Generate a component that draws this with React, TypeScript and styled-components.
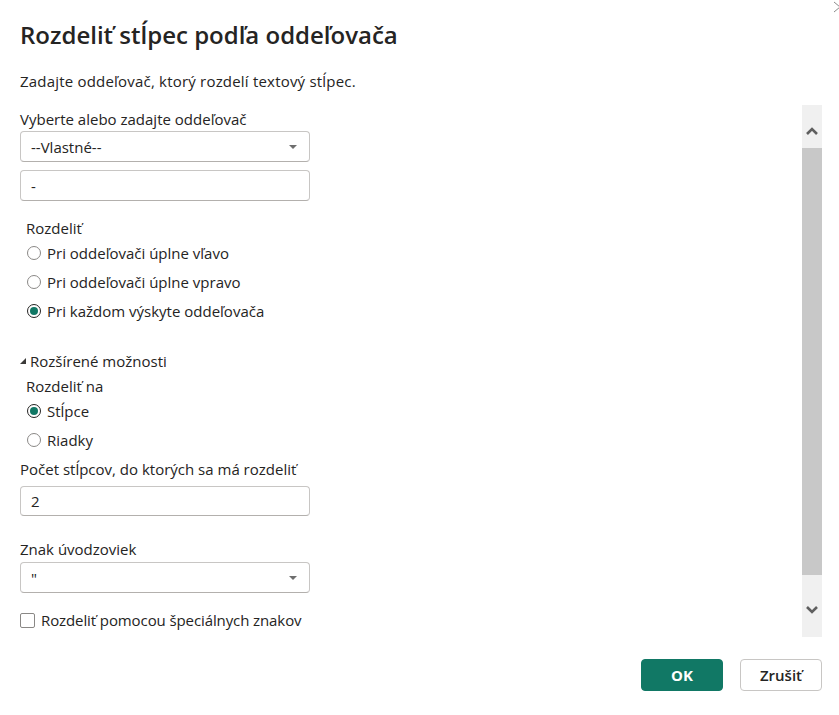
import React, { useState } from "react";
import styled, { createGlobalStyle } from "styled-components";

const GlobalStyle = createGlobalStyle`
  html, body {
    margin: 0;
    padding: 0;
    background: #fff;
  }
  body {
    font-family: "Segoe UI", "Open Sans", "Noto Sans", sans-serif;
    color: #252423;
  }
`;

const teal = "#117865";

const Dialog = styled.div`
  position: relative;
  width: 839px;
  height: 715px;
  box-sizing: border-box;
  padding: 19px 17px 0 20px;
  background: #fff;
  display: flex;
  flex-direction: column;
  overflow: hidden;
`;

const CloseX = styled.svg`
  position: absolute;
  top: 1px;
  right: -4px;
`;

const Title = styled.h1`
  margin: 0;
  font-size: 24px;
  line-height: 32px;
  font-weight: 600;
  color: #252423;
`;

const Subtitle = styled.p`
  margin: 20px 0 0 0;
  font-size: 15px;
  line-height: 20px;
  letter-spacing: 0.2px;
`;

const Body = styled.div`
  display: flex;
  justify-content: space-between;
  height: 532px;
  margin-top: 14px;
`;

const Content = styled.div`
  width: 290px;
  padding-top: 4px;
  display: flex;
  flex-direction: column;
`;

const Label = styled.div<{ $indent?: boolean; $top?: number }>`
  font-size: 15px;
  line-height: 20px;
  padding-left: ${(p) => (p.$indent ? "6px" : "0")};
  margin-top: ${(p) => p.$top ?? 0}px;
  white-space: nowrap;
`;

const Field = styled.div<{ $top?: number; $h?: number }>`
  box-sizing: border-box;
  height: ${(p) => p.$h ?? 31}px;
  margin-top: ${(p) => p.$top ?? 0}px;
  border: 1px solid #c8c6c4;
  border-bottom-color: #b3b0ad;
  border-radius: 4px;
  display: flex;
  align-items: center;
  justify-content: space-between;
  padding: 0 12px 0 10px;
  font-size: 15px;
  color: #252423;
`;

const Caret = styled.span`
  width: 0;
  height: 0;
  border-left: 4px solid transparent;
  border-right: 4px solid transparent;
  border-top: 4px solid #6e6e6e;
`;

const RadioRow = styled.label`
  display: flex;
  align-items: center;
  gap: 6px;
  height: 29px;
  padding-left: 7px;
  font-size: 15px;
  cursor: pointer;
  white-space: nowrap;
`;

const RadioCircle = styled.span<{ $checked: boolean }>`
  box-sizing: border-box;
  width: 14px;
  height: 14px;
  border-radius: 50%;
  border: 1px solid ${(p) => (p.$checked ? "#252423" : "#8a8886")};
  display: flex;
  align-items: center;
  justify-content: center;
  &::after {
    content: "";
    width: 8px;
    height: 8px;
    border-radius: 50%;
    background: ${(p) => (p.$checked ? teal : "transparent")};
  }
`;

const Expander = styled.div`
  display: flex;
  align-items: center;
  gap: 4px;
  margin-top: 26px;
  font-size: 15px;
  line-height: 20px;
`;

const CheckRow = styled.label`
  display: flex;
  align-items: center;
  gap: 6px;
  margin-top: 17px;
  height: 20px;
  font-size: 15px;
  white-space: nowrap;
  letter-spacing: -0.1px;
`;

const CheckBox = styled.span`
  box-sizing: border-box;
  width: 15px;
  height: 15px;
  border: 1px solid #8a8886;
  border-radius: 2px;
`;

const ScrollBar = styled.div`
  width: 20px;
  background: #f0f0f0;
  display: flex;
  flex-direction: column;
  align-items: stretch;
`;

const ArrowZone = styled.div<{ $h: number; $pad: number }>`
  height: ${(p) => p.$h}px;
  box-sizing: border-box;
  padding-top: ${(p) => p.$pad}px;
  display: flex;
  justify-content: center;
`;

const Thumb = styled.div`
  height: 427px;
  background: #c8c8c8;
`;

const Footer = styled.div`
  display: flex;
  justify-content: flex-end;
  gap: 17px;
  margin-top: 22px;
`;

const Button = styled.button<{ $primary?: boolean }>`
  width: 82px;
  height: 32px;
  border-radius: 4px;
  font-family: inherit;
  font-size: 15px;
  font-weight: ${(p) => (p.$primary ? 700 : 600)};
  background: ${(p) => (p.$primary ? teal : "#fff")};
  color: ${(p) => (p.$primary ? "#fff" : "#252423")};
  border: 1px solid ${(p) => (p.$primary ? teal : "#c8c6c4")};
  cursor: pointer;
`;

function Radio({ label, checked, onClick }: { label: string; checked: boolean; onClick: () => void }) {
  return (
    <RadioRow onClick={onClick}>
      <RadioCircle $checked={checked} />
      {label}
    </RadioRow>
  );
}

export default function App() {
  const [split, setSplit] = useState(2);
  const [into, setInto] = useState(0);

  const splitOptions = [
    "Pri oddeľovači úplne vľavo",
    "Pri oddeľovači úplne vpravo",
    "Pri každom výskyte oddeľovača",
  ];

  return (
    <>
      <GlobalStyle />
      <Dialog>
        <CloseX width="10" height="12" viewBox="0 0 10 12">
          <path d="M1 1 L7 6 L1 11" fill="none" stroke="#8a8a8a" strokeWidth="1" />
        </CloseX>
        <Title>Rozdeliť stĺpec podľa oddeľovača</Title>
        <Subtitle>Zadajte oddeľovač, ktorý rozdelí textový stĺpec.</Subtitle>

        <Body>
          <Content>
            <Label>Vyberte alebo zadajte oddeľovač</Label>
            <Field $top={2}>
              <span>--Vlastné--</span>
              <Caret />
            </Field>
            <Field $top={8}>-</Field>

            <Label $indent $top={17}>Rozdeliť</Label>
            {splitOptions.map((o, i) => (
              <Radio key={o} label={o} checked={split === i} onClick={() => setSplit(i)} />
            ))}

            <Expander>
              <svg width="6" height="6" viewBox="0 0 6 6">
                <polygon points="6,0 6,6 0,6" fill="#3b3a39" />
              </svg>
              Rozšírené možnosti
            </Expander>
            <Label $indent $top={5}>Rozdeliť na</Label>
            <Radio label="Stĺpce" checked={into === 0} onClick={() => setInto(0)} />
            <Radio label="Riadky" checked={into === 1} onClick={() => setInto(1)} />

            <Label $top={5}>Počet stĺpcov, do ktorých sa má rozdeliť</Label>
            <Field $top={7} $h={30}>2</Field>

            <Label $top={23}>Znak úvodzoviek</Label>
            <Field $top={3}>
              <span>"</span>
              <Caret />
            </Field>

            <CheckRow>
              <CheckBox />
              Rozdeliť pomocou špeciálnych znakov
            </CheckRow>
          </Content>

          <ScrollBar>
            <ArrowZone $h={43} $pad={22}>
              <svg width="12" height="8" viewBox="0 0 12 8">
                <path d="M1 7 L6 2 L11 7" fill="none" stroke="#5f5f5f" strokeWidth="2.6" />
              </svg>
            </ArrowZone>
            <Thumb />
            <ArrowZone $h={62} $pad={31}>
              <svg width="12" height="8" viewBox="0 0 12 8">
                <path d="M1 1 L6 6 L11 1" fill="none" stroke="#5f5f5f" strokeWidth="2.6" />
              </svg>
            </ArrowZone>
          </ScrollBar>
        </Body>

        <Footer>
          <Button $primary>OK</Button>
          <Button>Zrušiť</Button>
        </Footer>
      </Dialog>
    </>
  );
}
